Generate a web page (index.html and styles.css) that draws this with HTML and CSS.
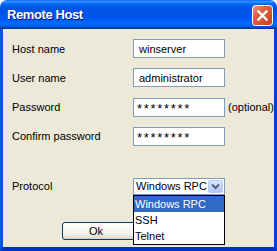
FILE: index.html
```html
<html>
<head>
<meta charset="utf-8">
<title>Remote Host</title>
<link rel="stylesheet" href="styles.css">
</head>
<body>
<div class="window">
  <div class="titlebar">
    <span class="title">Remote Host</span>
    <span class="close">
      <svg width="21" height="21" viewBox="0 0 21 21">
        <defs>
          <linearGradient id="closeFill" x1="0" y1="0" x2="1" y2="1">
            <stop offset="0" stop-color="#f09a7c"/>
            <stop offset="0.35" stop-color="#e2603c"/>
            <stop offset="1" stop-color="#c8401c"/>
          </linearGradient>
        </defs>
        <rect x="0.5" y="0.5" width="20" height="20" rx="3" fill="url(#closeFill)" stroke="#fff"/>
        <path d="M6.5 6.5L14.5 14.5M14.5 6.5L6.5 14.5" stroke="#fff" stroke-width="2.3" stroke-linecap="square"/>
      </svg>
    </span>
  </div>
  <div class="client">
    <div class="fields">
      <label>Host name</label>
      <div class="field">winserver</div>
      <span></span>
      <label>User name</label>
      <div class="field">administrator</div>
      <span></span>
      <label>Password</label>
      <div class="field secret">********</div>
      <span class="hint">(optional)</span>
      <label>Confirm password</label>
      <div class="field secret">********</div>
      <span></span>
    </div>
    <div class="protocol">
      <label>Protocol</label>
      <div class="combo">
        <span class="combo-value">Windows RPC</span>
        <span class="combo-arrow">
          <svg width="9" height="7" viewBox="0 0 9 7">
            <path d="M1 1.5L4.5 5L8 1.5" fill="none" stroke="#4d6185" stroke-width="2"/>
          </svg>
        </span>
        <ul class="combo-list">
          <li class="selected">Windows RPC</li>
          <li>SSH</li>
          <li>Telnet</li>
        </ul>
      </div>
    </div>
    <div class="actions">
      <button type="button" class="btn">Ok</button>
    </div>
  </div>
</div>
</body>
</html>
```

FILE: styles.css
```css
html {
  background: #fff;
}
body {
  margin: 0;
  font: 11px "Liberation Sans", Arial, sans-serif;
  color: #000;
}
.window {
  width: 277px;
  height: 251px;
  display: flex;
  flex-direction: column;
}
.titlebar {
  height: 29px;
  flex: none;
  display: flex;
  justify-content: space-between;
  align-items: center;
  padding: 0 4px 0 7px;
  border-radius: 7px 7px 0 0;
  background: linear-gradient(to bottom, #0058ee 0%, #3593ff 4%, #288eff 7%, #127dff 10%, #036ffc 13%, #0262ee 17%, #0057e5 24%, #0054e3 30%, #0055eb 56%, #005bf5 68%, #026afe 80%, #0062ef 88%, #0052d6 93%, #0040ab 96%, #003092 100%);
}
.title {
  color: #fff;
  font: bold 13px "Liberation Sans", Arial, sans-serif;
  letter-spacing: -0.4px;
  text-shadow: 1px 1px #0a1883;
  margin-top: -1px;
}
.close {
  width: 21px;
  height: 21px;
  align-self: flex-start;
  margin-top: 5px;
}
.client {
  flex: 1;
  background: #ece9d8;
  border-style: solid;
  border-width: 0 3px 4px 3px;
  border-color: #0055e5 #0040d8 #0032c6 #0055e5;
  padding: 10px 0 0 9px;
}
.fields {
  display: grid;
  grid-template-columns: 118px 92px auto;
  column-gap: 3px;
  row-gap: 10.33px;
  align-items: center;
}
.fields label,
.protocol label {
  grid-column: 1;
}
.field {
  height: 19px;
  box-sizing: border-box;
  border: 1px solid #7f9db9;
  background: #fff;
  padding: 0 5px;
  display: flex;
  align-items: center;
  white-space: nowrap;
}
.secret {
  font-size: 13px;
  letter-spacing: 1.7px;
  padding-left: 3px;
  padding-top: 2px;
}
.hint {
  white-space: nowrap;
}
.protocol {
  display: grid;
  grid-template-columns: 121px 92px;
  align-items: center;
  margin-top: 32px;
}
.combo {
  position: relative;
  height: 17px;
  box-sizing: border-box;
  border: 1px solid #7f9db9;
  background: #fff;
  display: flex;
  align-items: center;
  padding: 1px;
}
.combo-value {
  flex: 1;
  padding-left: 1px;
  white-space: nowrap;
}
.combo-arrow {
  width: 15px;
  height: 13px;
  box-sizing: border-box;
  border: 1px solid #b8cbf5;
  border-radius: 2px;
  background: linear-gradient(to bottom, #dce7fd, #c4d5fb 50%, #b3c8f8);
  display: flex;
  align-items: center;
  justify-content: center;
}
.combo-list {
  position: absolute;
  left: -1px;
  right: -1px;
  top: 16px;
  margin: 0;
  padding: 0;
  list-style: none;
  border: 1px solid #000;
  background: #fff;
  z-index: 1;
}
.combo-list li {
  height: 16px;
  line-height: 16px;
  padding-left: 1px;
}
.combo-list li.selected {
  background: #316ac5;
  color: #fff;
}
.actions {
  margin-top: 27px;
  padding-left: 50px;
}
.btn {
  width: 74px;
  height: 18px;
  padding: 0 6px 0 0;
  font: 11px "Liberation Sans", Arial, sans-serif;
  color: #000;
  border: 1px solid #003c74;
  border-radius: 3px;
  background: linear-gradient(to bottom, #fff, #f4f3ee 60%, #e3e0d3 90%, #d6d0c5);
}
```
